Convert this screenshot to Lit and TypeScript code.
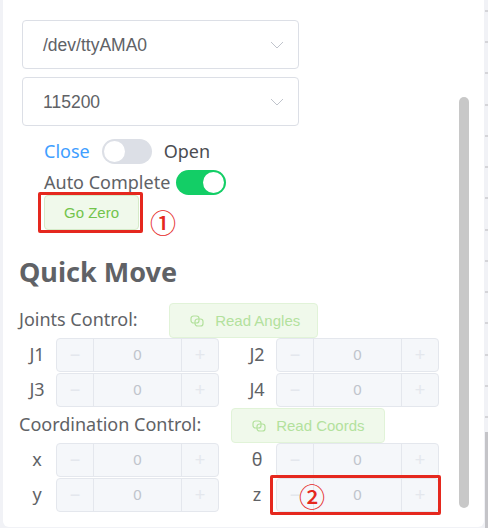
import { LitElement, css, html, svg } from "lit";
import { customElement } from "lit/decorators.js";

const linkIcon = svg`<svg class="icon" viewBox="0 0 14 12" width="14" height="12" fill="none" stroke="currentColor" stroke-width="1.2">
  <rect x="1" y="1" width="8" height="7" rx="2.6" />
  <rect x="5" y="4" width="8" height="7" rx="2.6" />
</svg>`;

@customElement("app-root")
export class AppRoot extends LitElement {
  static styles = css`
    :host {
      display: block;
      position: relative;
      width: 488px;
      height: 528px;
      overflow: hidden;
      background: #f1f2f6;
      font-family: "Noto Sans", "Liberation Sans", sans-serif;
      color: #606266;
    }

    .card {
      box-sizing: border-box;
      width: 481px;
      height: 527px;
      margin-left: 3px;
      padding: 20px 0 0 16px;
      background: #fff;
      border-radius: 0 0 6px 6px;
    }

    .select {
      box-sizing: border-box;
      display: flex;
      align-items: center;
      justify-content: space-between;
      width: 277px;
      height: 49px;
      margin: 0 0 8px 3px;
      padding: 1px 14px 0 20px;
      border: 1px solid #dcdfe6;
      border-radius: 4px;
      font-family: "Liberation Sans", sans-serif;
      font-size: 17.5px;
    }

    .select svg {
      margin-top: -1px;
    }

    .switch-row {
      display: flex;
      align-items: center;
      height: 25px;
      margin-left: 25px;
      font-size: 18px;
      line-height: 25px;
    }

    .switch-row.first {
      margin-top: 13px;
      margin-bottom: 6px;
    }

    .active {
      color: #409eff;
    }

    .open {
      color: #4b4d52;
    }

    .toggle {
      box-sizing: border-box;
      width: 50px;
      height: 25px;
      padding: 2px;
      margin: 0 12px 0 12px;
      border-radius: 13px;
      background: #dcdfe6;
    }

    .toggle::after {
      content: "";
      display: block;
      width: 21px;
      height: 21px;
      border-radius: 50%;
      background: #fff;
    }

    .toggle.on {
      margin: 0 0 0 6px;
      background: #13ce66;
    }

    .toggle.on::after {
      margin-left: 25px;
    }

    button {
      box-sizing: border-box;
      height: 35px;
      border: 1px solid #d5ebc8;
      border-radius: 4px;
      background: #f0f9eb;
      color: #72c44c;
      font-family: "Liberation Sans", sans-serif;
      font-size: 15px;
      padding: 0;
    }

    .zero {
      display: block;
      width: 95px;
      margin-left: 25px;
    }

    h2 {
      margin: 22px 0 11px;
      font-size: 27px;
      line-height: 40px;
      font-weight: 700;
    }

    .section {
      display: flex;
      align-items: center;
      height: 35px;
      font-size: 18px;
    }

    .section span {
      padding-bottom: 4px;
    }

    .read {
      display: flex;
      align-items: center;
      justify-content: center;
      gap: 11px;
      border-color: #e1f3d8;
      color: #b3e19d;
    }

    .angles {
      width: 149px;
      margin-left: 31px;
      padding-left: 4px;
    }

    .coords {
      width: 154px;
      margin-left: 30px;
      gap: 10px;
    }

    .grid {
      display: grid;
      grid-template-columns: 200px 200px;
      column-gap: 20px;
    }

    .item {
      display: flex;
      align-items: flex-start;
      height: 35px;
    }

    .item label {
      width: 36px;
      margin-right: 1px;
      text-align: center;
      font-size: 18px;
      line-height: 33px;
    }

    .number {
      box-sizing: border-box;
      display: flex;
      width: 163px;
      height: 34px;
      border: 1px solid #e4e7ed;
      border-radius: 4px;
      background: #f5f7fa;
      color: #c0c4cc;
      font-family: "Liberation Sans", sans-serif;
      font-size: 15px;
      line-height: 32px;
      text-align: center;
    }

    .number span {
      width: 36px;
      color: #e4e7ed;
      font-size: 18px;
    }

    .number span:first-child {
      border-right: 1px solid #e4e7ed;
    }

    .number span:last-child {
      border-left: 1px solid #e4e7ed;
    }

    .number div {
      flex: 1;
    }

    /* annotations drawn over the screenshot */
    .mark {
      position: absolute;
      box-sizing: border-box;
      border: 3px solid #e5281e;
      border-radius: 2px;
    }

    .mark.one {
      left: 38px;
      top: 192px;
      width: 105px;
      height: 41px;
    }

    .mark.two {
      left: 270px;
      top: 475px;
      width: 171px;
      height: 40px;
    }

    .num {
      position: absolute;
      color: #e5281e;
      font-family: "Noto Sans CJK SC", sans-serif;
      font-size: 26px;
      font-weight: 500;
      line-height: 28px;
    }

    .num.one {
      left: 150px;
      top: 208px;
    }

    .num.two {
      left: 299px;
      top: 482px;
    }

    .thumb {
      position: absolute;
      left: 459px;
      top: 97px;
      width: 10px;
      height: 411px;
      border-radius: 5px;
      background: #c8c8c8;
    }

    .strip {
      position: absolute;
      left: 485px;
      top: 10px;
      width: 3px;
      height: 422px;
      background: repeating-linear-gradient(
        to bottom,
        #d4d4d8 0 2px,
        transparent 2px 31.25px
      );
    }

    .strip-end {
      position: absolute;
      left: 485px;
      top: 432px;
      width: 3px;
      height: 96px;
      background: #c4c4c8;
    }
  `;

  renderNumber(name: string) {
    return html`<div class="item">
      <label>${name}</label>
      <div class="number">
        <span>−</span>
        <div>0</div>
        <span>+</span>
      </div>
    </div>`;
  }

  render() {
    return html`
      <div class="card">
        <div class="select">/dev/ttyAMA0 ${this.renderArrow()}</div>
        <div class="select">115200 ${this.renderArrow()}</div>
        <div class="switch-row first">
          <span class="active">Close</span>
          <div class="toggle"></div>
          <span class="open">Open</span>
        </div>
        <div class="switch-row">
          <span>Auto Complete</span>
          <div class="toggle on"></div>
        </div>
        <button class="zero">Go Zero</button>
        <h2>Quick Move</h2>
        <div class="section">
          <span>Joints Control:</span>
          <button class="read angles">${linkIcon}Read Angles</button>
        </div>
        <div class="grid">
          ${["J1", "J2", "J3", "J4"].map((n) => this.renderNumber(n))}
        </div>
        <div class="section">
          <span>Coordination Control:</span>
          <button class="read coords">${linkIcon}Read Coords</button>
        </div>
        <div class="grid">
          ${["x", "θ", "y", "z"].map((n) => this.renderNumber(n))}
        </div>
      </div>
      <div class="mark one"></div>
      <div class="num one">①</div>
      <div class="mark two"></div>
      <div class="num two">②</div>
      <div class="thumb"></div>
      <div class="strip"></div>
      <div class="strip-end"></div>
    `;
  }

  renderArrow() {
    return html`<svg width="14" height="8" viewBox="0 0 14 8" fill="none" stroke="#c0c4cc" stroke-width="1">
      <path d="M1 1l6 6 6-6" />
    </svg>`;
  }
}
